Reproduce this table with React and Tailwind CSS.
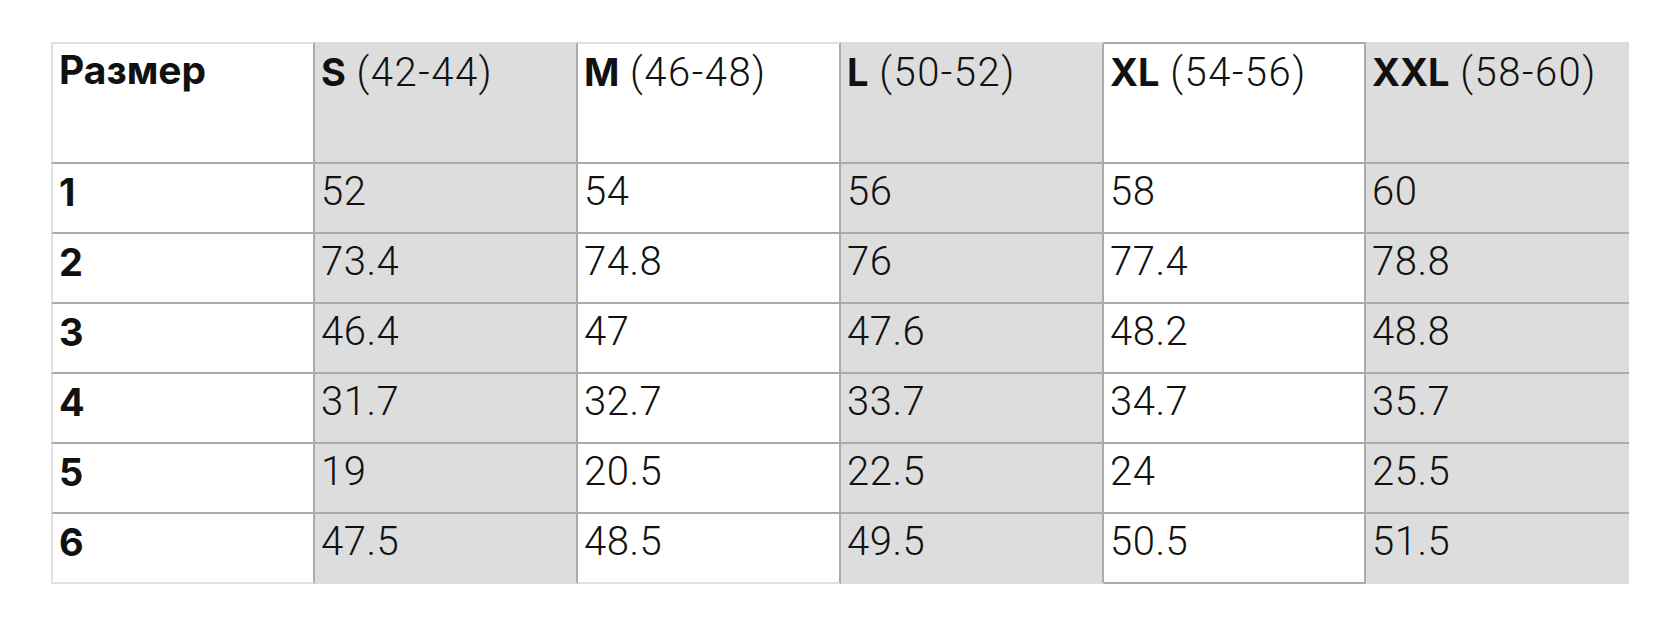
import React from "react";

const sizes = [
  { code: "S", range: "(42-44)" },
  { code: "M", range: "(46-48)" },
  { code: "L", range: "(50-52)" },
  { code: "XL", range: "(54-56)" },
  { code: "XXL", range: "(58-60)" },
];

const rows = [
  ["1", "52", "54", "56", "58", "60"],
  ["2", "73.4", "74.8", "76", "77.4", "78.8"],
  ["3", "46.4", "47", "47.6", "48.2", "48.8"],
  ["4", "31.7", "32.7", "33.7", "34.7", "35.7"],
  ["5", "19", "20.5", "22.5", "24", "25.5"],
  ["6", "47.5", "48.5", "49.5", "50.5", "51.5"],
];

// per column: background + outer borders
const colStyle = [
  "bg-white border-l-2 border-l-[#e0e0e0]",
  "bg-[#dddddd]",
  "bg-white",
  "bg-[#dddddd]",
  "bg-white",
  "bg-[#dddddd]",
];

const topBorder = [
  "border-t-[#e0e0e0]",
  "border-t-[#dddddd]",
  "border-t-[#e0e0e0]",
  "border-t-[#dddddd]",
  "border-t-[#ababab]",
  "border-t-[#dddddd]",
];

const lastBottom = [
  "border-b-[#e0e0e0]",
  "border-b-[#dddddd]",
  "border-b-[#e0e0e0]",
  "border-b-[#dddddd]",
  "border-b-[#ababab]",
  "border-b-[#dddddd]",
];

const cellBase = (col) =>
  `${colStyle[col]} border-b-2 ${col < 5 ? "border-r-2 border-r-[#ababab]" : ""} pl-[6px]`;

const light = "font-['Roboto',sans-serif] font-light text-[40px]";

export default function App() {
  return (
    <div
      className="w-[1680px] h-[630px] bg-white pt-[42px] pl-[51px] text-[#111]"
      style={{ fontFamily: "Inter, 'Noto Sans', sans-serif" }}
    >
      <div className="grid w-[1578px] grid-cols-[264px_263px_263px_263px_262px_263px]">
        {/* header */}
        <div
          className={`${cellBase(0)} border-t-2 ${topBorder[0]} border-b-[#ababab] h-[122px] pt-[3px] text-[39px] font-bold leading-[46px]`}
        >
          Размер
        </div>
        {sizes.map((s, i) => (
          <div
            key={s.code}
            className={`${cellBase(i + 1)} border-t-2 ${topBorder[i + 1]} border-b-[#ababab] h-[122px] pt-[4px] text-[38px] leading-[48px]`}
          >
            <span className="font-bold">{s.code}</span>{" "}
            <span className={`${light} tracking-[1.5px]`}>{s.range}</span>
          </div>
        ))}

        {/* body */}
        {rows.map((row, r) =>
          row.map((val, c) => (
            <div
              key={r + "-" + c}
              className={`${cellBase(c)} ${
                r === rows.length - 1 ? lastBottom[c] : "border-b-[#ababab]"
              } h-[70px] pt-[4px] text-[38px] leading-[48px] ${
                c === 0 ? "font-bold" : `${light} tracking-[0.5px]`
              }`}
            >
              {val}
            </div>
          ))
        )}
      </div>
    </div>
  );
}
